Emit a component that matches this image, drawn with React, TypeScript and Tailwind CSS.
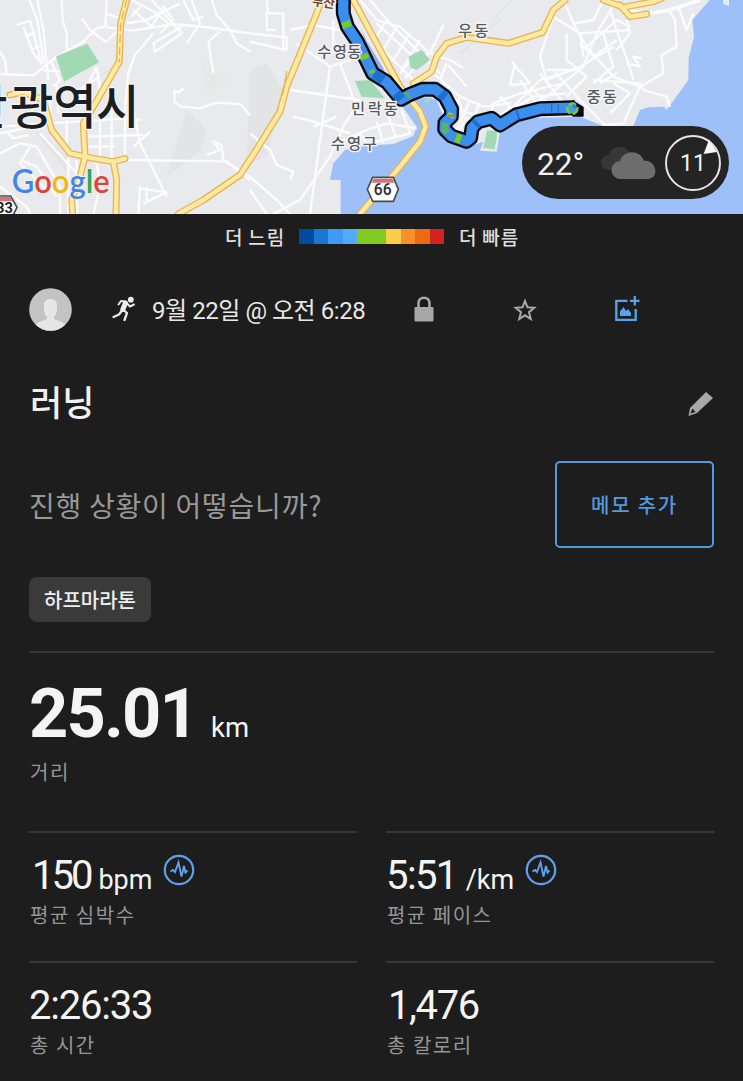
import type { ReactNode } from "react";

const speedColors = [
  "bg-[#004ba0]", "bg-[#1976d2]", "bg-[#3f99f5]", "bg-[#55a9ff]", "bg-[#80cb22]",
  "bg-[#80cb22]", "bg-[#fccd4b]", "bg-[#fb8f2b]", "bg-[#ec6b12]", "bg-[#d32321]",
];

const KR = "font-['Noto_Sans_CJK_KR',sans-serif]";
const NUM = "font-['Roboto','Noto_Sans_CJK_KR',sans-serif]";

const ROUTE =
  "M1030 -10 L1030 40 L1042 80 L1072 125 L1096 175 L1118 220 L1160 246 L1203 298 L1228 284 L1268 268 L1305 268 L1335 290 L1355 328 L1354 350 L1335 368 L1334 388 L1354 408 L1400 424 L1412 414 L1416 384 L1434 365 L1475 355 L1500 375 L1550 344 L1620 326 L1725 323";

const streets = [
  // west
  "M88 0 L112 60 L132 190", "M112 0 L130 90 L145 240", "M50 75 L90 62 L125 190 L100 160 L70 80", "M75 110 L108 95", "M92 150 L120 138",
  "M0 222 L100 226 L170 170 L250 125 L290 85 L320 78", "M185 0 L188 60 L200 100 L200 150", "M245 55 L270 90 L318 126 L350 95", "M320 0 L316 80",
  "M316 40 L360 55", "M320 82 L400 92 L520 72 L640 84 L750 100", "M395 0 L470 40 L510 75", "M380 70 L440 60 L540 10", "M400 30 L455 80 L490 20 L520 60 L480 100",
  "M395 50 L420 20", "M455 0 L545 100 L465 155 L460 130 L545 80", "M575 0 L600 70 L560 130", "M550 0 L580 60 L610 50", "M635 0 L650 45 L690 90 L710 130 L750 155",
  "M625 125 L640 220", "M625 125 L660 95", "M0 155 L15 180 L20 222", "M375 480 L375 320 L385 220 L405 165 L460 100", "M550 265 L535 278 L523 272 V305 L545 320 L600 325 L650 308 L720 312 L750 345",
  "M0 380 L380 355 L420 360", "M0 400 L120 375", "M20 395 L40 415 L85 405", "M200 360 L200 440", "M300 350 L300 480", "M335 260 L335 480", "M265 410 L430 405", "M265 440 L345 440",
  "M220 280 L300 230", "M240 300 L290 200", "M290 200 L300 270", "M405 355 L420 430 L500 590", "M450 395 L400 440", "M375 480 L680 484 L750 540",
  "M0 460 L60 430 L110 440 L180 560 L180 642", "M60 480 L110 500 L170 590", "M90 440 L60 490 L140 570", "M120 400 L230 520", "M205 470 L205 642", "M230 480 L230 642",
  "M290 490 L300 560 L280 642", "M420 560 L415 642", "M420 565 L500 577 L430 610", "M440 560 L440 600", "M620 465 L660 450 L640 425 L665 435 L670 480 L750 530", "M150 300 L150 370", "M170 250 L175 340",
  "M0 560 L80 620 L90 642", "M150 180 L180 240 L160 260", "M130 210 L180 215",
  // centre
  "M750 100 L860 112 L860 150 L750 125", "M850 155 L850 40 L800 40 L800 90 L830 90", "M800 0 L805 40", "M870 90 L940 75 L1020 90", "M890 130 L990 200 L930 642",
  "M990 200 L1050 180", "M870 270 L1080 300", "M1000 60 L1000 160", "M1020 190 L1080 350", "M1080 300 L1030 380 L990 470 L900 600 L820 642",
  "M750 400 L810 450 L830 495 L880 515 L870 540", "M750 530 L830 600 L870 642", "M750 570 L800 642", "M940 380 L1010 350", "M880 350 L960 370 L1050 400",
  "M1010 430 L1100 390 L1160 370 L1250 385", "M1110 430 L1230 400 L1205 330", "M1080 400 L1110 445", "M1130 365 L1150 430", "M1165 350 L1190 415",
  "M1080 0 L1130 60 L1200 80 L1290 160", "M1070 20 L1100 90 L1160 160 L1240 240", "M1110 0 L1180 80 L1320 220", "M1160 60 L1130 110", "M1190 80 L1150 150",
  "M1230 100 L1180 180", "M1260 120 L1205 210", "M1285 160 L1215 235", "M1330 75 L1290 160", "M1130 70 L1240 170 L1200 220", "M1290 160 L1350 180 L1390 205", "M1345 195 L1400 260",
  "M1300 220 L1380 290 L1450 320 L1530 310", "M1300 250 L1380 310 L1390 350 L1450 370", "M1380 290 L1350 350", "M1410 300 L1370 390", "M1440 310 L1420 350",
  "M1360 330 L1460 350", "M1480 310 L1470 350", "M1380 390 L1400 350", "M1320 240 L1340 190",
  // east
  "M1690 0 L1720 70 L1760 140 L1840 230 L1920 260", "M1850 0 L1790 100 L1750 200 L1640 290 L1560 330", "M1660 50 L1740 100 L1890 90", "M1810 0 L1780 60 L1720 70",
  "M1660 50 L1620 170 L1640 240 L1740 200", "M1760 140 L1850 60 L1890 80", "M1830 30 L1850 90 L1885 190 L1900 240", "M1850 120 L1780 170 L1740 130", "M1740 200 L1840 140",
  "M1810 100 L1840 200 L1780 250", "M1530 330 L1620 240 L1720 210", "M1535 185 L1590 250 L1530 255 L1545 190", "M1560 240 L1610 310", "M1590 260 L1650 320", "M1620 220 L1690 310",
  "M1660 210 L1740 300 L1820 380", "M1480 310 L1560 280 L1690 250", "M1500 350 L1600 290 L1700 280", "M1700 180 L1760 230 L1700 290", "M1880 190 L1920 200 L1900 170 L1925 175",
  "M1780 240 L1920 250 L1930 270 L2000 290 L2010 320", "M1920 260 L1870 370 L1820 375", "M1840 250 L1890 280 L1830 340", "M1800 250 L1850 220", "M1920 260 L1990 220 L1985 165 L2030 140 L2025 60 L2010 35",
  "M2035 20 L2060 90 L2080 40", "M1880 60 L1890 100 L1850 150", "M1740 100 L1750 170", "M1700 100 L1700 180", "M1640 210 L1740 210", "M1500 290 L1530 320 L1500 350",
];

const highways = [
  "M380 0 L362 70 L358 185 L280 320 L250 370 L255 470 L240 530 L215 600 L218 642",
  "M30 285 L70 275 L130 300 L155 390 L210 460 L280 475 L340 485 L375 476",
  "M340 485 L350 540 L348 642",
  "M750 478 L720 525 L610 600 L535 642", "M750 480 L840 335 L860 260 L950 40 L965 0",
  "M1060 0 L1200 260 L1260 335 L1277 380 L1260 425 L1200 500 L1080 642",
  "M1240 250 L1295 215 L1310 170 L1340 130 L1400 112 L1525 130 L1628 97 L1660 30 L1695 0",
  "M1810 0 L1870 22 L1960 5 L1985 -5", "M1860 15 L1890 50 L1940 42",
];

function MapView() {
  return (
    <svg className="block h-full w-full" viewBox="0 0 2229 642" preserveAspectRatio="none">
      <rect width="2229" height="642" fill="#e8eaed" />
      <g fill="#e2e4e6">
        <path d="M500 530 L560 330 L620 390 L600 455Z" /><path d="M750 210 L800 190 L850 270 L800 470 L740 490Z" />
        <path d="M100 390 L210 470 L205 520Z" /><path d="M600 180 L690 240 L620 280Z" fill="#e6e9e8" />
      </g>
      <g fill="#9dc0f9">
        <path d="M1022 642 V540 H990 L1000 490 L1035 450 L1090 438 L1180 432 L1240 408 L1250 380 L1200 310 L1240 285 L1310 300 L1350 400 L1400 440 L1450 425 L1440 452 L1490 455 L1500 395 L1580 355 L1740 350 L1815 380 L1900 378 L1920 330 L1945 322 L1992 320 L2000 330 L2065 240 L2066 175 L2082 110 L2077 60 L2129 0 H2229 V642Z" />
        <path d="M1080 80 L1098 120 L1150 205 L1165 245 L1130 215Z" fill="#94adec" />
      </g>
      <path d="M2169 0 L2170 12 L2187 18 V0Z" fill="#e8eaed" />
      <g fill="none" stroke="#d8dbdf" strokeWidth="3">
        <path d="M1479 60 L1530 5" /><path d="M1380 160 L1500 60" /><path d="M270 250 L340 200" />
      </g>
      <g fill="none" stroke="#fcfcfd" strokeWidth="7" strokeLinejoin="round">
        {streets.map((d) => <path key={d} d={d} />)}
        <path d="M1870 25 L1940 42 L2010 30 L2100 0" strokeWidth="11" />
      </g>
      <g fill="#a1d9b5">
        <path d="M168 169 L262 131 L297 187 L192 245Z" /><path d="M1225 170 L1265 150 L1290 180 L1250 210 L1232 203Z" />
        <path d="M1065 243 L1110 240 L1155 295 L1085 290Z" /><path d="M1460 390 H1490 L1493 405 L1485 450 L1448 445Z" stroke="#e8eaed" strokeWidth="3" /><path d="M1270 300 L1298 290 L1285 310Z" />
      </g>
      <g fill="none" strokeLinejoin="round" strokeLinecap="round">
        {highways.map((d) => <path key={d} d={d} stroke="#e9b44f" strokeWidth="21" />)}
        {highways.map((d) => <path key={d} d={d} stroke="#ffe9a3" strokeWidth="13" />)}
        <path d="M380 0 L362 70 L358 185" stroke="#e9b44f" strokeWidth="4" strokeDasharray="22 14" />
        <path d="M860 215 L848 285" stroke="#e9b44f" strokeWidth="4" />
      </g>

      <g fill="none" strokeLinejoin="round">
        <path d={ROUTE} stroke="#05080d" strokeWidth="45" />
        <path d="M1700 320 L1719 303 L1749 322 V348 H1719Z" fill="#05080d" stroke="#05080d" strokeWidth="4" />
        <path d={ROUTE} stroke="#3b8eee" strokeWidth="31" />
        <g stroke="#1d6fd0" strokeWidth="29">
          <path d="M1122 222 L1150 240" /><path d="M1188 280 L1203 298" /><path d="M1322 280 L1336 292" /><path d="M1550 344 L1556 342" /><path d="M1424 374 L1432 366" />
        </g>
        <g stroke="#6bc43c" strokeWidth="27">
          <path d="M1036 64 L1043 82" stroke="#78cb22" /><path d="M1090 163 L1096 177" stroke="#78cb22" /><path d="M1113 210 L1118 220" strokeWidth="17" /><path d="M1221 289 L1229 284" strokeWidth="23" stroke="#4fae65" />
          <path d="M1335 368 L1334 388 L1342 398" strokeWidth="20" stroke="#58b568" /><path d="M1367 413 L1383 418" stroke="#78cb22" />
        </g>
        <path d="M1344 342 L1362 350" stroke="#8fcc4b" strokeWidth="13" /><path d="M1344 347 H1362" stroke="#c95b42" strokeWidth="5" />
        <path d="M1655 312 V338 M1675 312 V338" stroke="#246bb6" strokeWidth="3" />
        <circle cx="1717" cy="326" r="15" stroke="#77c94d" strokeWidth="8" fill="#43a3d3" strokeDasharray="22 7" />
        <path d="M1718 314 L1730 324" stroke="#367be0" strokeWidth="8" />
      </g>

      <g className={KR} fill="#56595e" stroke="#f4f5f7" strokeWidth="8" strokeLinejoin="round" paintOrder="stroke" fontSize="46" fontWeight="500">
        <text x="952 998 1042" y="171">수영동</text>
        <text x="1053 1103 1151" y="343">민락동</text>
        <text x="992 1041 1088" y="447">수영구</text>
        <text x="1374 1423" y="108">우동</text>
        <text x="1760 1808" y="306">중동</text>
        <text x="-108 30 160 288" y="373" fontSize="142" fill="#1b1e22">산광역시</text>
        <text x="936 969" y="16" fontSize="38" fontWeight="700" fill="#764629" transform="rotate(8 940 10)">부산</text>
      </g>

      <path d="M1102 568 L1118 532 H1180 L1195 568 L1180 604 H1118Z" fill="#fff" stroke="#4a4d54" strokeWidth="5" />
      <path d="M1114 548 L1121 536 H1177 L1183 548Z" fill="#d47374" />
      <text x="1148" y="586" textAnchor="middle" className={NUM} fontSize="47" fontWeight="500" fill="#2c2d31">66</text>
      <path d="M-10 588 H32 L51 622 L32 660 H-10Z" fill="#fff" stroke="#4a4d54" strokeWidth="5" />
      <path d="M-10 591 H30 L37 604 H-10Z" fill="#d47374" />
      <text x="-12" y="640" className={NUM} fontSize="44" fontWeight="700" fill="#202124">33</text>

      <g className="font-['Lato',sans-serif]" fontSize="98" fontWeight="600" stroke="#f1f2f4" strokeWidth="4" paintOrder="stroke">
        <text x="35" y="579" textLength="294" lengthAdjust="spacingAndGlyphs">
          <tspan fill="#4285e8">G</tspan><tspan fill="#db4639">o</tspan><tspan fill="#efb817">o</tspan><tspan fill="#4285e8">g</tspan><tspan fill="#35a255">l</tspan><tspan fill="#db4639">e</tspan>
        </text>
      </g>
    </svg>
  );
}

function Weather() {
  return (
    <div className={`absolute top-[126px] left-[522px] flex h-[73px] w-[207px] items-center rounded-full bg-[#242424] pl-[15px] text-[#f1f1f1] ${NUM}`}>
      <span className="w-[64px] pt-1 text-[31.5px] leading-9">22°</span>
      <svg className="h-8 w-14" viewBox="0 0 56 32">
        <path d="M7 23a7.500 7.500 0 0 1 1-15 A11 11 0 0 1 28 5 L20 23Z" fill="#373737" />
        <path d="M20 32a9 9 0 0 1-1-18 C22 3 39 2 43 14 C54 12 60 30 47 32Z" fill="#6d6d6d" />
      </svg>
      <div className="relative ml-2 flex size-14 items-center justify-center">
        <svg className="absolute inset-0" viewBox="0 0 56 56">
          <circle cx="28" cy="28" r="27" fill="none" stroke="#e5e5e5" strokeWidth="2" />
          <path d="M44 5 L38.500 19 L52 17Z" fill="#f5f5f5" />
        </svg>
        <span className="pt-0.5 text-[23px] leading-7">11</span>
      </div>
    </div>
  );
}

function SensorIcon() {
  return (
    <svg className="size-8 shrink-0" viewBox="0 0 32 32" fill="none" stroke="#5da2ec" strokeWidth="2.200">
      <circle cx="16" cy="16" r="14.200" />
      <path d="M7.500 17.500 L10 16 L12 18 L15.500 8.500 L18.500 22.500 L21 12 L22.500 18.500 L24.500 16.500" strokeWidth="1.900" />
    </svg>
  );
}

function Metric({ value, unit, label, sensor, valueClass, unitClass }: { value: string; unit?: string; label: string; sensor?: boolean; valueClass: string; unitClass?: string }) {
  return (
    <div className="h-[130px] border-t-2 border-[#373737] pt-[22px]">
      <div className="flex h-[40px] items-start text-[#f4f4f4]">
        <div className={`flex items-baseline whitespace-nowrap ${NUM}`}>
          <span className={`text-[40px] leading-[42px] ${valueClass}`}>{value}</span>
          {unit && <span className={`text-[27px] leading-8 ${unitClass}`}>{unit}</span>}
        </div>
        {sensor && <div className="-mt-px ml-[11px]"><SensorIcon /></div>}
      </div>
      <Label>{label}</Label>
    </div>
  );
}

function Label({ children }: { children: ReactNode }) {
  return <div className={`pt-px pl-px text-[20px] leading-[38px] tracking-[1.5px] text-[#959595] ${KR}`}>{children}</div>;
}

export default function App() {
  return (
    <main className={`h-[1081px] w-[743px] overflow-hidden bg-[#1d1d1d] ${KR}`}>
      <section className="relative h-[214px] overflow-hidden">
        <MapView />
        <Weather />
      </section>

      <div className="flex h-[46px] items-center pl-[225px] text-[19px] font-medium tracking-[0.8px] text-[#dedede]">
        <span className="w-[74px] whitespace-nowrap">더 느림</span>
        <div className="grid h-[15px] w-[145px] -translate-y-px grid-cols-10">
          {speedColors.map((color, i) => <span key={i} className={color} />)}
        </div>
        <span className="ml-[15px] whitespace-nowrap">더 빠름</span>
      </div>

      <div className="flex h-[100px] items-center pl-[29px]">
        <svg className="size-[43px] -translate-y-px" viewBox="0 0 43 43">
          <defs><clipPath id="avatar"><circle cx="21.500" cy="21.500" r="21.300" /></clipPath></defs>
          <g clipPath="url(#avatar)">
            <rect width="43" height="43" fill="#c3c3c3" />
            <path d="M15 17 C15 9 28 9 28 17 C28.500 23 27 27 25 29 V31 C29 33 34 33 37 38 V43 H6 V38 C9 33 14 33 18 31 V29 C16 27 14.500 23 15 17Z" fill="#e6e6e6" />
          </g>
        </svg>
        <svg className="ml-[40px] h-[26px] w-[24px] -translate-y-px" viewBox="0 0 24 26">
          <circle cx="18.800" cy="3.700" r="2.900" fill="#ececec" />
          <g fill="none" stroke="#ececec" strokeLinecap="round" strokeLinejoin="round">
            <path d="M13.500 7 L10.800 13.500" strokeWidth="5" />
            <path d="M13 5.500 L9 5 L6.500 8.500 M15 7.500 L18 10.500 L22 8.500" strokeWidth="2" />
            <path d="M10 14.500 L7 18.500 L1.500 21 M11 13.500 L15 17 L12.500 24" strokeWidth="2.300" />
          </g>
        </svg>
        <span className={`ml-[16px] w-[262px] pt-0.5 text-[24px] whitespace-nowrap text-[#e8e8e8] tracking-[-0.45px] ${NUM}`}>9월 22일 @ 오전 6:28</span>
        <svg className="h-[26px] w-[20px] -translate-y-px" viewBox="0 0 20 26">
          <rect x="0.500" y="11" width="19" height="14.500" rx="1" fill="#a8a8a8" />
          <path d="M4.500 12 V7 C4.500 0 15.500 0 15.500 7 V12" fill="none" stroke="#a8a8a8" strokeWidth="2.600" />
        </svg>
        <svg className="ml-[79px] size-[24px]" viewBox="0 0 24 24" fill="none" stroke="#a8a8a8" strokeWidth="2">
          <path d="M12 3 L14.500 9.300 L21.300 9.800 L16 14.200 L17.800 21 L12 17.300 L6.200 21 L8 14.200 L2.700 9.800 L9.500 9.300Z" />
        </svg>
        <svg className="ml-[78px] size-[25px] -translate-y-0.5" viewBox="0 0 25 25" fill="none" stroke="#55a3f1" strokeWidth="2.300">
          <path d="M12.500 4.800 H1.300 V24 H20.700 V13 M15 4.800 H24.500 M19.800 0 V9.500" />
          <path d="M5 20 V15.500 L8.500 11 L11 15 L13 13 L16 17 V20Z" fill="#55a3f1" stroke="none" />
        </svg>
      </div>

      <div className="mx-[29px] flex h-[88px] items-center justify-between">
        <h1 className="pb-[7px] pl-px text-[35px] leading-[48px] font-medium text-[#f0f0f0]">러닝</h1>
        <svg className="h-[26px] w-[26px]" viewBox="0 0 26 26">
          <path d="M0.500 25 L2 17 L18 1 L25 7 L9 22Z" fill="#a8a8a8" />
          <path d="M4.500 17.500 L7.500 21 L2.500 22.500Z" fill="#1d1d1d" />
        </svg>
      </div>

      <div className="ml-[29px] flex h-[113px] w-[685px] items-center justify-between">
        <span className="text-[28px] tracking-[0.75px] whitespace-nowrap text-[#989898]">진행 상황이 어떻습니까?</span>
        <button className="h-[87px] w-[159px] rounded-[5px] border-2 border-[#5299e0] text-[20px] font-medium tracking-[1.8px] text-[#5299e0]">메모 추가</button>
      </div>

      <div className="ml-[29px] flex h-[92px] w-[685px] items-start border-b-2 border-[#373737] pt-[16px]">
        <span className="flex h-[45px] w-[122px] items-center justify-center rounded-lg bg-[#3a3a3a] text-[20px] font-medium text-[#eee]">하프마라톤</span>
      </div>

      <div className="ml-[29px] h-[178px] pt-[22px]">
        <div className={`flex h-[77px] items-baseline text-[#f4f4f4] ${NUM}`}>
          <span className="text-[68.5px] leading-[78px] font-bold tracking-[-1.8px]">25.01</span>
          <span className="ml-[14px] text-[27.5px]">km</span>
        </div>
        <Label>거리</Label>
      </div>

      <div className="ml-[29px] grid w-[685px] grid-cols-2 gap-x-[29px]">
        <Metric value="150" unit="bpm" label="평균 심박수" sensor valueClass="pl-[3px] tracking-[-3px]" unitClass="ml-[8px]" />
        <Metric value="5:51" unit="/km" label="평균 페이스" sensor valueClass="tracking-[-1.6px]" unitClass="ml-[9px]" />
        <Metric value="2:26:33" label="총 시간" valueClass="tracking-[-1.2px]" />
        <Metric value="1,476" label="총 칼로리" valueClass="pl-[2px] tracking-[-1.4px]" />
      </div>
    </main>
  );
}
